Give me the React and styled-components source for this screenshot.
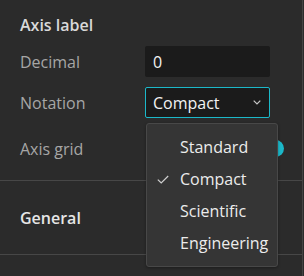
import React, { useState } from "react";
import styled, { createGlobalStyle } from "styled-components";

const GlobalStyle = createGlobalStyle`
  html, body {
    margin: 0;
    padding: 0;
    background: #2b2b2b;
    font-family: "Open Sans", Lato, sans-serif;
  }
`;

const notations = ["Standard", "Compact", "Scientific", "Engineering"];

const App = () => {
  const [notation, setNotation] = useState("Compact");
  const [decimal, setDecimal] = useState("0");

  return (
    <>
      <GlobalStyle />
      <Panel>
        <Section>
          <Heading>Axis label</Heading>
          <Row>
            <Label>Decimal</Label>
            <NumberInput
              value={decimal}
              onChange={(e) => setDecimal(e.target.value)}
            />
          </Row>
          <Row>
            <Label>Notation</Label>
            <SelectWrap>
              <Select>
                <span>{notation}</span>
                <Chevron viewBox="0 0 8 5">
                  <path d="M0.7 0.7 L4 4 L7.3 0.7" />
                </Chevron>
              </Select>
              <Menu>
                {notations.map((n) => (
                  <MenuItem key={n} onClick={() => setNotation(n)}>
                    {n === notation && (
                      <Check viewBox="0 0 12 9">
                        <path d="M0.8 4.6 L4.2 8 L11.2 1" />
                      </Check>
                    )}
                    {n}
                  </MenuItem>
                ))}
              </Menu>
            </SelectWrap>
          </Row>
          <SwitchRow>
            <Label>Axis grid</Label>
            <Switch />
          </SwitchRow>
        </Section>
        <GroupHeader>General</GroupHeader>
        <Rest />
      </Panel>
    </>
  );
};
export default App;

const Panel = styled.div`
  width: 302px;
  height: 276px;
  border-right: 1px solid #444;
  display: flex;
  flex-direction: column;
`;

const Section = styled.div`
  padding: 14px 18px 16px 20px;
  border-bottom: 1px solid #474747;
  display: flex;
  flex-direction: column;
  gap: 10px;
`;

const Heading = styled.div`
  height: 22px;
  line-height: 22px;
  font-size: 16px;
  font-weight: 600;
  color: #d9d9d9;
`;

const Row = styled.div`
  display: grid;
  grid-template-columns: 125px 125px;
  align-items: center;
  height: 31px;
`;

const SwitchRow = styled(Row)`
  grid-template-columns: 125px 1fr;
  margin-top: 5px;
`;

const Label = styled.div`
  font-size: 16px;
  color: #a6a6a6;
`;

const NumberInput = styled.input`
  box-sizing: border-box;
  width: 125px;
  height: 31px;
  border: 1px solid transparent;
  border-radius: 2px;
  background: #1b1b1b;
  color: #f2f2f2;
  font-family: inherit;
  font-size: 16px;
  padding: 0 7px;
  outline: none;
`;

const SelectWrap = styled.div`
  position: relative;
`;

const Select = styled.div`
  box-sizing: border-box;
  width: 125px;
  height: 31px;
  border: 1px solid #1cb8c9;
  border-radius: 2px;
  background: #1b1b1b;
  color: #f2f2f2;
  font-size: 16px;
  padding: 0 8px 0 7px;
  display: flex;
  align-items: center;
  justify-content: space-between;
`;

const Chevron = styled.svg`
  width: 8px;
  height: 5px;
  fill: none;
  stroke: #c8c8c8;
  stroke-width: 1.2;
`;

const Menu = styled.div`
  position: absolute;
  top: calc(100% + 5px);
  left: 1px;
  width: 132px;
  box-sizing: border-box;
  padding: 7px 0;
  background: #353535;
  border: 1px solid #484848;
  border-radius: 3px;
  box-shadow: 0 1px 3px rgba(0, 0, 0, 0.35);
  z-index: 2;
`;

const MenuItem = styled.div`
  position: relative;
  height: 32px;
  line-height: 32px;
  padding-left: 33px;
  font-size: 16px;
  color: #ececec;
  cursor: pointer;
`;

const Check = styled.svg`
  position: absolute;
  left: 10px;
  top: 12px;
  width: 12px;
  height: 9px;
  fill: none;
  stroke: #d0d0d0;
  stroke-width: 1.2;
`;

const Switch = styled.div`
  justify-self: end;
  width: 32px;
  height: 17px;
  border-radius: 9px;
  background: #1cb8c9;
`;

const GroupHeader = styled.div`
  height: 73px;
  display: flex;
  align-items: center;
  padding-left: 20px;
  font-size: 16px;
  font-weight: 600;
  color: #e6e6e6;
  border-bottom: 1px solid #474747;
`;

const Rest = styled.div`
  flex: 1;
`;
